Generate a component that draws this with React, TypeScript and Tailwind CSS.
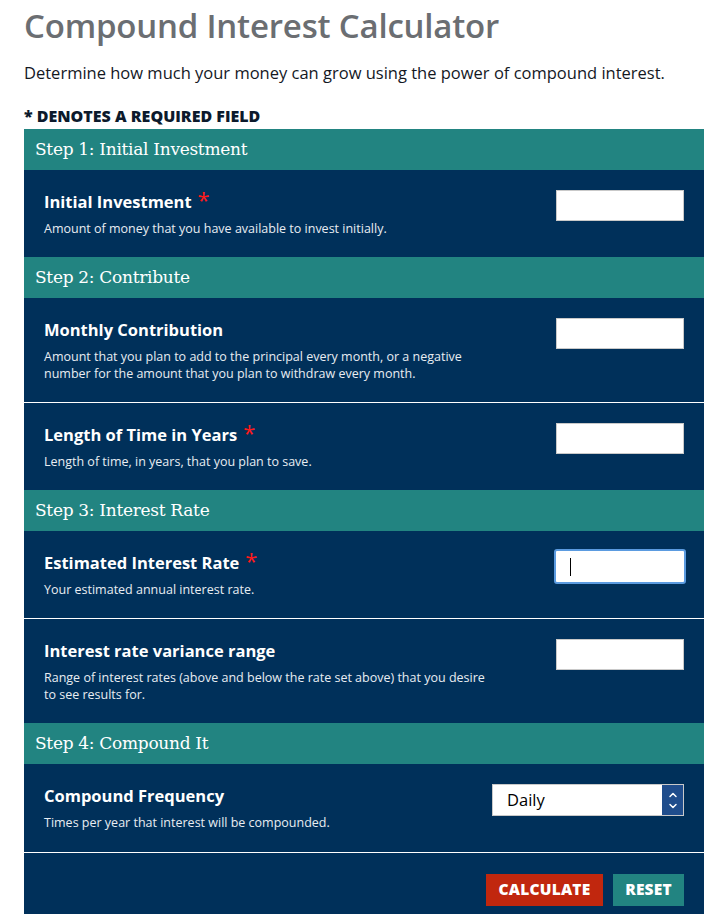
import { ChevronUp, ChevronDown } from "lucide-react";

type Field = {
  label: string;
  desc: string;
  required?: boolean;
  focused?: boolean;
};

type Step = {
  title: string;
  fields: Field[];
};

const steps: Step[] = [
  {
    title: "Step 1: Initial Investment",
    fields: [
      {
        label: "Initial Investment",
        desc: "Amount of money that you have available to invest initially.",
        required: true,
      },
    ],
  },
  {
    title: "Step 2: Contribute",
    fields: [
      {
        label: "Monthly Contribution",
        desc: "Amount that you plan to add to the principal every month, or a negative number for the amount that you plan to withdraw every month.",
      },
      {
        label: "Length of Time in Years",
        desc: "Length of time, in years, that you plan to save.",
        required: true,
      },
    ],
  },
  {
    title: "Step 3: Interest Rate",
    fields: [
      {
        label: "Estimated Interest Rate",
        desc: "Your estimated annual interest rate.",
        required: true,
        focused: true,
      },
      {
        label: "Interest rate variance range",
        desc: "Range of interest rates (above and below the rate set above) that you desire to see results for.",
      },
    ],
  },
];

function Header({ title }: { title: string }) {
  return (
    <div className="h-[41px] bg-[#228481] flex items-center px-[11px] text-white text-[17px] font-['DejaVu_Serif',serif] tracking-[-0.3px]">
      {title}
    </div>
  );
}

function FieldRow({ field, last }: { field: Field; last: boolean }) {
  return (
    <div
      className={`flex justify-between px-5 pt-5 pb-5 ${
        last ? "" : "border-b border-white"
      }`}
    >
      <div className="max-w-[445px]">
        <div className="h-6 flex items-center text-white font-bold text-[16.5px]">
          {field.label}
          {field.required && (
            <span className="text-[#ff1a1a] text-[22px] ml-[6px] -mt-[6px] font-normal">*</span>
          )}
        </div>
        <p className="mt-[6px] text-[12.5px] leading-[17px] text-[#e8edf2]">{field.desc}</p>
      </div>
      {field.focused ? (
        <div className="relative -mr-[2px] -mt-[2px] w-[132px] h-[35px] rounded-[3px] border-2 border-[#5b9be0] bg-white">
          <span className="absolute left-[14px] top-[7px] w-px h-[18px] bg-black" />
        </div>
      ) : (
        <input
          type="text"
          className="w-[128px] h-[31px] bg-white border border-[#c9c9c9] outline-none"
        />
      )}
    </div>
  );
}

export default function App() {
  return (
    <div className="min-h-screen bg-white font-['Open_Sans',sans-serif] pl-6 pr-[7px]">
      <h1 className="pt-[2px] text-[33px] leading-[48px] text-[#6b6e72] font-semibold tracking-[-0.2px]">
        Compound Interest Calculator
      </h1>
      <p className="mt-[12px] text-[16.5px] leading-[22px] text-[#14181f]">
        Determine how much your money can grow using the power of compound interest.
      </p>
      <p className="mt-[22px] mb-[3px] text-[16px] leading-[20px] font-extrabold uppercase text-[#0c1a2c]">
        * Denotes a required field
      </p>

      <div className="bg-[#00305a]">
        {steps.map((s) => (
          <div key={s.title}>
            <Header title={s.title} />
            {s.fields.map((f, i) => (
              <FieldRow key={f.label} field={f} last={i === s.fields.length - 1} />
            ))}
          </div>
        ))}

        <Header title="Step 4: Compound It" />
        <div className="flex justify-between px-5 pt-5 pb-[21px] border-b border-white">
          <div>
            <div className="h-6 flex items-center text-white font-bold text-[16.5px]">
              Compound Frequency
            </div>
            <p className="mt-[6px] text-[12.5px] leading-[17px] text-[#e8edf2]">
              Times per year that interest will be compounded.
            </p>
          </div>
          <div className="w-[192px] h-[32px] flex bg-white border border-[#c9c9c9]">
            <span className="flex-1 flex items-center pl-[14px] text-[16.5px] text-black">Daily</span>
            <span className="w-[21px] bg-[#1f4d8c] flex flex-col items-center justify-center text-white">
              <ChevronUp className="w-[14px] h-[12px] -mb-[1px]" strokeWidth={3} />
              <ChevronDown className="w-[14px] h-[12px]" strokeWidth={3} />
            </span>
          </div>
        </div>

        <div className="flex justify-end gap-[10px] px-5 pt-[21px] pb-[12px]">
          <button className="h-[32px] w-[117px] bg-[#c1270e] text-white font-extrabold text-[15.5px] tracking-[0.2px]">
            CALCULATE
          </button>
          <button className="h-[32px] w-[71px] bg-[#228481] text-white font-extrabold text-[15.5px] tracking-[0.2px]">
            RESET
          </button>
        </div>
      </div>
    </div>
  );
}
